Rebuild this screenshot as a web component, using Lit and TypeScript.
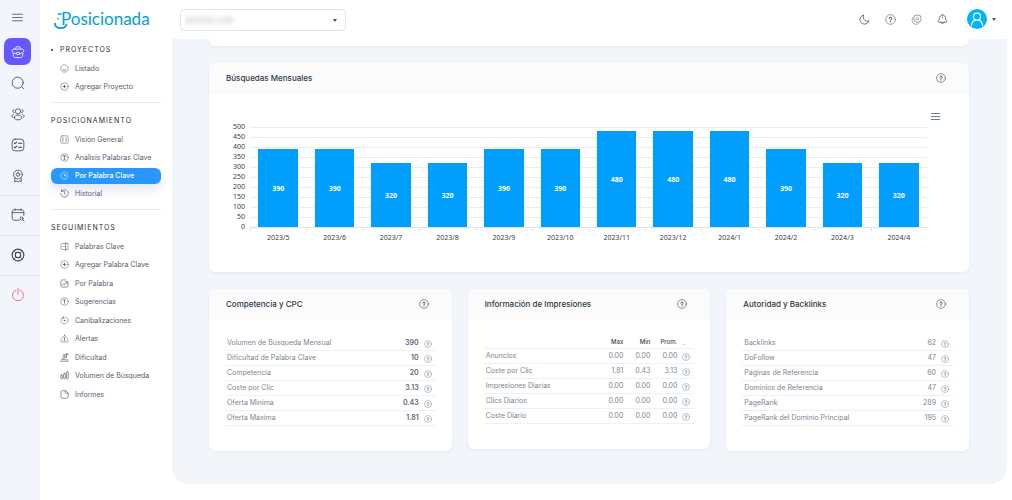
import { LitElement, html, svg, css, nothing } from "lit";
import { customElement, property } from "lit/decorators.js";
import { classMap } from "lit/directives/class-map.js";

const ICONS: Record<string, unknown> = {
  menu: svg`<path d="M3 6h18M3 12h18M3 18h18"/>`,
  lines: svg`<path d="M3 5.500h18M3 12h18M3 18.500h18" stroke-width="2.600"/>`,
  briefcase: svg`<path d="M8 7V5.500C8 4 9 3 10.500 3h3C15 3 16 4 16 5.500V7M5 7h14c1.700 0 3 1.300 3 3v0c0 2.500-4 4.500-7 5M9 15c-3-.5-7-2.500-7-5v0c0-1.700 1.300-3 3-3M3.500 14l.7 4.500C4.500 20.500 5.500 21.500 7.500 21.500h9c2 0 3-1 3.300-3l.7-4.500"/><ellipse cx="12" cy="14.500" rx="3" ry="2.200"/>`,
  search: svg`<circle cx="11.500" cy="11.500" r="9.500"/><path d="M18.500 18.500L22 22"/>`,
  people: svg`<circle cx="12" cy="7.500" r="4.500"/><path d="M5.500 18c0-2.500 3-4 6.500-4s6.500 1.500 6.500 4-3 4-6.500 4-6.500-1.500-6.500-4z"/><path d="M5.500 4.500c-3 0-3.500 5 0 5M18.500 4.500c3 0 3.500 5 0 5M4 13c-3 .5-3.500 4-1 5M20 13c3 .5 3.500 4 1 5"/>`,
  checklist: svg`<rect x="2" y="2" width="20" height="20" rx="5"/><path d="M5.500 8.500l1.300 1.300L10 7M5.500 15.500l1.300 1.300L10 14M13 9h5.500M13 16h5.500" stroke-width="1.800"/>`,
  award: svg`<circle cx="12" cy="9.500" r="7.500"/><circle cx="12" cy="9.500" r="3"/><path d="M12 6v1M6.500 15.500V22l3-1.500L12 22l2.500-1.500 3 1.500v-6.500"/>`,
  calendar: svg`<path d="M14 21H6c-2.500 0-4-1.500-4-4V7c0-2.500 1.500-4 4-4h12c2.500 0 4 1.500 4 4v6M2 8h20M7 1.500V4M17 1.500V4"/><circle cx="18" cy="18" r="2.700"/><path d="M20 20l2.500 2.500"/>`,
  support: svg`<circle cx="12" cy="12" r="10" stroke-width="2"/><rect x="7.500" y="7.500" width="9" height="9" rx="3.500" stroke-width="2"/><path d="M4.800 4.800l3.500 3.500M19.200 4.800l-3.500 3.500M4.800 19.200l3.500-3.500M19.200 19.200l-3.500-3.500" stroke-width="1"/>`,
  power: svg`<path d="M8.500 3.500a9.500 9.500 0 1 0 7 0M12 1v10"/>`,
  smile: svg`<path d="M8 2.500h8L21.500 8v8L16 21.500H8L2.500 16V8z"/><path d="M8.500 15.500q3.500 2.500 7 0" stroke-width="2"/>`,
  plus: svg`<circle cx="12" cy="12" r="10"/><path d="M12 8.500v7M8.500 12h7" stroke-width="2.200"/>`,
  overview: svg`<rect x="2" y="2" width="20" height="20" rx="4"/><path d="M7 8h2M15 8h2M7 12h.5M16.500 12h.5M7 16h2M15 16h2" stroke-width="2"/>`,
  textcircle: svg`<circle cx="12" cy="12" r="10"/><path d="M7.500 9V7.500h9V9M12 7.500V17M10 17h4" stroke-width="1.800"/>`,
  target: svg`<path d="M13 2.500a9.700 9.700 0 1 0 8.500 8.500M11.500 13L21 3M11.500 8v5h5"/>`,
  history: svg`<path d="M4 6a10 10 0 1 1-2 6M4 2v4.500h4.500M12 7v5.500l3.500 2" stroke-width="1.800"/>`,
  word: svg`<path d="M13 4H5C3.500 4 2.500 5 2.500 6.500v11C2.500 19 3.500 20 5 20h8M17 4h4.500v16H17M7.500 12h5"/><path d="M15 1.500v21" stroke-width="2"/>`,
  chart: svg`<path d="M21.500 11v6c0 3-1.500 4.500-4.500 4.500H7c-3 0-4.500-1.500-4.500-4.500V7c0-3 1.500-4.500 4.500-4.500h8M6 16l4-3 3 2 6-8M16 7h4v4" stroke-width="1.800"/>`,
  suggest: svg`<circle cx="12" cy="12" r="10"/><path d="M12 17V8M8.500 9.500L12 6.500l3.500 3" stroke-width="1.800"/>`,
  cycle: svg`<path d="M10 3.500C5 4 2 8 2.500 13s5 8.500 10 7.500M15 3.500c4.500 1 7 5 6.500 9.500s-3.500 6.500-6 7.500M10 1.500v4.500H6"/><circle cx="12" cy="12" r="1.200" stroke-width="2"/>`,
  alert: svg`<path d="M12 3C9.500 3 2 17 2 18.500S3.500 21 5 21h14c1.500 0 3-1 3-2.500S14.500 3 12 3z"/><path d="M12 9v5.500M12 17v.8" stroke-width="2"/>`,
  climb: svg`<path d="M2 22h20M3 18.500c3 0 4-2 7-2s4 2 11 2M6 11c3-3 6-3 8-1l-4 6M14 10l4 3M7 16l3-3M17 2v8M17 2l5 1.700L17 6" stroke-width="1.800"/><circle cx="11" cy="5" r="2"/>`,
  bars: svg`<g stroke-width="1.800"><rect x="2" y="10" width="4.500" height="11" rx="2"/><rect x="9.700" y="6" width="4.500" height="15" rx="2"/><rect x="17.500" y="2" width="4.500" height="19" rx="2"/></g>`,
  file: svg`<path d="M14 2H6.500C4 2 2.500 3.500 2.500 6v12c0 2.500 1.500 4 4 4h11c2.500 0 4-1.500 4-4V9zM14 2v3.500C14 8 15 9 17.500 9h4" stroke-width="1.800"/>`,
  moon: svg`<path d="M10 2.500C5 3.500 2 7.500 2 12c0 5.500 4.500 10 10 10 4.500 0 8.500-3 9.700-7.500-4 2.500-9 1-11-3-1.500-3-1.700-6-.7-9z" stroke-width="2"/>`,
  help: svg`<circle cx="12" cy="12" r="10.500"/><path d="M9.200 10c0-3.700 5.800-3.500 5.600-.2-.1 1.700-2.800 2-2.800 4M12 16.300v1" stroke-width="2.200"/>`,
  star: svg`<path d="M14 2l3 1.500L20.500 4l.5 3.500 1.500 3-1.500 3-1 3-3.500.5-3 1.500-3-2-3-1-.5-3L5.500 10 7 7l.5-3.500L11 3.500z"/><path d="M4.500 8c-4 5-2 12 4 14 4 1 7-.5 9-2.500M11 9c1.500-1.500 4.500-1.500 6 .5M11 12c1.500 1 4 1 6-.5"/>`,
  bell: svg`<path d="M12 2c-4 0-6.500 3-6.500 7 0 4-3 5.500-3 7.500 0 1 1 1.500 2 1.500h15c1 0 2-.5 2-1.500 0-2-3-3.500-3-7.500 0-4-2.500-7-6.500-7zM8.500 18c.5 4.500 6.500 4.500 7 0" stroke-width="1.900"/><path d="M12 6v3"/>`,
  user: svg`<g stroke-width="2"><circle cx="12" cy="8" r="6"/><path d="M2.500 23c.5-5 3-8 6.500-9.500M21.500 23c-.5-5-3-8-6.500-9.500"/></g>`,
};

@customElement("ui-icon")
class UiIcon extends LitElement {
  @property() name = "menu";
  static styles = css`
    :host { display: inline-flex; width: 14px; height: 14px; flex: none; }
    svg { width: 100%; height: 100%; fill: none; stroke: currentColor; stroke-width: 1.400; stroke-linecap: round; stroke-linejoin: round; }
  `;
  render() {
    return html`<svg viewBox="0 0 24 24" aria-hidden="true">${ICONS[this.name]}</svg>`;
  }
}

type Item = [icon: string, label: string];
const SECTIONS: { title: string; dot?: boolean; items: Item[] }[] = [
  { title: "Proyectos", dot: true, items: [["smile", "Listado"], ["plus", "Agregar Proyecto"]] },
  {
    title: "Posicionamiento",
    items: [["overview", "Visión General"], ["textcircle", "Análisis Palabras Clave"], ["target", "Por Palabra Clave"], ["history", "Historial"]],
  },
  {
    title: "Seguimientos",
    items: [
      ["word", "Palabras Clave"], ["plus", "Agregar Palabra Clave"], ["chart", "Por Palabra"],
      ["suggest", "Sugerencias"], ["cycle", "Canibalizaciones"], ["alert", "Alertas"],
      ["climb", "Dificultad"], ["bars", "Volumen de Búsqueda"], ["file", "Informes"],
    ],
  },
];

@customElement("side-menu")
class SideMenu extends LitElement {
  static styles = css`
    :host { display: block; padding: 4px 11px 16px; }
    section + section { border-top: 1px solid #e4eaf1; margin-top: 6px; padding-top: 11px; }
    h2 { display: flex; align-items: center; gap: 7px; margin: 0 0 4px; font-size: 7px; line-height: 13px; font-weight: 400; letter-spacing: 1px; text-transform: uppercase; color: #1f2c3d; }
    .dot { width: 2px; height: 2px; border-radius: 50%; background: #1d2939; }
    ul { list-style: none; margin: 0; padding: 0; }
    li:nth-child(even) { margin-bottom: 1px; }
    a { display: flex; align-items: center; gap: 6px; height: 17px; padding: 0 0 1px 9px; font-size: 7px; white-space: nowrap; color: #566170; text-decoration: none; }
    ui-icon { width: 9px; height: 9px; }
    .active { height: 15px; margin: 1px 0; border-radius: 6px; background: #2897ff; color: #fff; font-weight: 500; box-shadow: 0 6px 10px #e6e6fb; }
  `;
  render() {
    return SECTIONS.map(
      (s) => html`<section>
        <h2>${s.dot ? html`<span class="dot"></span>` : nothing}${s.title}</h2>
        <ul>
          ${s.items.map(
            ([icon, label]) => html`<li>
              <a href="#" class=${classMap({ active: label === "Por Palabra Clave" })}><ui-icon name=${icon}></ui-icon>${label}</a>
            </li>`
          )}
        </ul>
      </section>`
    );
  }
}

@customElement("help-button")
class HelpButton extends LitElement {
  static styles = css`
    :host { display: inline-flex; width: 8px; height: 8px; vertical-align: middle; }
    button { all: unset; display: flex; width: 100%; cursor: pointer; color: inherit; }
    ui-icon { width: 100%; height: 100%; }
  `;
  render() {
    return html`<button aria-label="Ayuda"><ui-icon name="help"></ui-icon></button>`;
  }
}

@customElement("info-card")
class InfoCard extends LitElement {
  @property() heading = "";
  static styles = css`
    :host { display: block; background: #fff; border-radius: 6px; box-shadow: 0 1px 3px #e3e8f1; }
    header { display: flex; align-items: center; justify-content: space-between; height: 29px; padding: 0 23px 2px 17px; background: #fbfbfc; border-radius: 6px 6px 0 0; }
    h3 { margin: 0; font-size: 8px; line-height: 12px; font-weight: 500; color: #2b3a4a; }
    help-button { width: 10px; height: 10px; color: #3f4a57; }
  `;
  render() {
    return html`<header><h3>${this.heading}</h3><help-button></help-button></header><slot></slot>`;
  }
}

const MONTHS: [string, number][] = [
  ["2023/5", 390], ["2023/6", 390], ["2023/7", 320], ["2023/8", 320], ["2023/9", 390], ["2023/10", 390],
  ["2023/11", 480], ["2023/12", 480], ["2024/1", 480], ["2024/2", 390], ["2024/3", 320], ["2024/4", 320],
];
const TICKS = [500, 450, 400, 350, 300, 250, 200, 150, 100, 50, 0];

@customElement("month-chart")
class MonthChart extends LitElement {
  static styles = css`
    :host { display: block; padding: 17px 28px 29px 24px; font-family: "Liberation Sans Narrow", "Noto Sans", sans-serif; color: #373d3f; }
    .tools { display: flex; justify-content: flex-end; }
    .tools button { all: unset; display: flex; cursor: pointer; color: #6e8192; }
    .tools ui-icon { width: 11px; height: 11px; }
    .body { display: grid; grid-template-columns: 12px 1fr; column-gap: 5px; padding-right: 14px; }
    .scale { margin-bottom: -4px; font-size: 7px; line-height: 10px; text-align: right; }
    .plot { display: flex; height: 100px; margin-top: 5px; border-bottom: 1px solid #e0e3e6; background: repeating-linear-gradient(#ebedef 0 1px, transparent 1px 10px); }
    .slot { flex: 1; display: flex; align-items: flex-end; justify-content: center; }
    .bar { width: 70%; display: flex; align-items: center; justify-content: center; background: #009ffd; color: #fff; font-size: 7px; font-weight: 700; }
    .months { grid-column: 2; display: flex; }
    .months span { flex: 1; padding-top: 5px; font-size: 7px; line-height: 10px; text-align: center; background: linear-gradient(#e0e3e6, #e0e3e6) 0 0 / 1px 3px no-repeat; }
  `;
  render() {
    return html`
      <div class="tools"><button aria-label="Menú del gráfico"><ui-icon name="lines"></ui-icon></button></div>
      <div class="body">
        <div class="scale">${TICKS.map((t) => html`<div>${t}</div>`)}</div>
        <div class="plot">
          ${MONTHS.map(([, v]) => html`<div class="slot"><div class="bar" style="height:${v / 5}%">${v}</div></div>`)}
        </div>
        <div class="months">${MONTHS.map(([m]) => html`<span>${m}</span>`)}</div>
      </div>
    `;
  }
}

@customElement("data-table")
class DataTable extends LitElement {
  @property({ attribute: false }) columns: string[] = [];
  @property({ attribute: false }) rows: string[][] = [];
  @property({ type: Boolean }) strong = false;
  static styles = css`
    :host { display: block; padding: 16px 16px 25px; }
    table { width: 100%; table-layout: fixed; border-collapse: separate; border-spacing: 0; font-size: 7px; line-height: 12px; color: #7b8794; }
    th, td { box-sizing: border-box; width: 27px; height: 15px; padding: 0; border-bottom: 1px solid #eef0f3; text-align: right; font-weight: 400; white-space: nowrap; }
    .name { width: auto; padding-left: 2px; text-align: left; }
    .strong td { font-weight: 600; color: #5b6878; }
    thead th, thead td { height: 13px; font-size: 6px; font-weight: 500; color: #3c4855; }
    .help { width: 17px; padding: 1px 4px 0 0; line-height: 8px; }
    thead .help { text-align: center; }
    help-button { color: #76828f; }
  `;
  render() {
    return html`<table class=${classMap({ strong: this.strong })}>
      ${this.columns.length
        ? html`<thead><tr><td class="name"></td>${this.columns.map((c) => html`<th scope="col">${c}</th>`)}<th class="help">.</th></tr></thead>`
        : nothing}
      <tbody>
        ${this.rows.map(
          ([name, ...vals]) => html`<tr>
            <th class="name" scope="row">${name}</th>
            ${vals.map((v) => html`<td>${v}</td>`)}
            <td class="help"><help-button></help-button></td>
          </tr>`
        )}
      </tbody>
    </table>`;
  }
}

const COMPETITION = [
  ["Volumen de Búsqueda Mensual", "390"], ["Dificultad de Palabra Clave", "10"], ["Competencia", "20"],
  ["Coste por Clic", "3.13"], ["Oferta Mínima", "0.43"], ["Oferta Máxima", "1.81"],
];
const IMPRESSIONS = [
  ["Anuncios", "0.00", "0.00", "0.00"], ["Coste por Clic", "1.81", "0.43", "3.13"],
  ["Impresiones Diarias", "0.00", "0.00", "0.00"], ["Clics Diarios", "0.00", "0.00", "0.00"],
  ["Coste Diario", "0.00", "0.00", "0.00"],
];
const AUTHORITY = [
  ["Backlinks", "62"], ["DoFollow", "47"], ["Páginas de Referencia", "60"],
  ["Dominios de Referencia", "47"], ["PageRank", "289"], ["PageRank del Dominio Principal", "195"],
];

@customElement("app-root")
class AppRoot extends LitElement {
  static styles = css`
    :host { display: grid; grid-template-columns: 40px 132px minmax(0, 1fr); grid-template-rows: 39px auto; min-height: 100vh; background: #fff; font-family: Inter, "Open Sans", sans-serif; }
    .rail { grid-row: 1 / 3; display: flex; flex-direction: column; background: #f2f6fb; padding-top: 4px; }
    .rail button { all: unset; display: grid; place-items: center; width: 27px; height: 27px; margin: 0 0 4px 4px; border-radius: 7px; color: #3a4757; cursor: pointer; }
    .rail .toggle { margin-bottom: 7px; }
    .rail .toggle ui-icon { width: 13px; height: 13px; }
    .rail .current { background: #6658ff; color: #fff; }
    .rail .end { margin-top: 5px; margin-bottom: 5px; }
    .rail hr { width: 100%; margin: 2px 0 0; border: 0; border-top: 1px solid #e0e7f0; }
    .rail .power { color: #fb4c85; }
    .top { grid-column: 2 / 4; display: flex; align-items: center; }
    .logo { display: flex; align-items: center; width: 126px; padding: 0 0 2px 14px; color: #009fdb; text-decoration: none; font: 400 17px/20px Lato, sans-serif; }
    .logo svg { width: 16px; height: 20px; fill: none; stroke: currentColor; stroke-width: 1.700; stroke-linecap: round; }
    .logo .word { margin-left: -9px; }
    .picker { position: relative; display: flex; width: 166px; height: 22px; }
    .picker select { appearance: none; box-sizing: border-box; width: 100%; height: 100%; padding: 0 20px 0 4px; border: 1px solid #e2e6ea; border-radius: 4px; background: #fff; font: 8px/20px Inter, sans-serif; color: transparent; text-shadow: 0 0 5px #a5a9af; }
    .caret { width: 0; height: 0; border: 2px solid transparent; border-top: 3px solid #4a5563; border-bottom: 0; }
    .picker .caret { position: absolute; right: 9px; top: 10px; }
    .actions { display: flex; align-items: center; margin-left: auto; padding: 0 16px 1px 0; color: #566b80; }
    .actions button { all: unset; display: flex; align-items: center; cursor: pointer; }
    .actions .tool { width: 12px; height: 12px; margin-right: 14px; }
    .actions .tool ui-icon { width: 11px; height: 11px; }
    .actions .account { gap: 5px; margin-left: 4px; }
    .avatar { display: grid; place-items: center; width: 20px; height: 20px; border-radius: 50%; background: #00b5fb; color: #fff; }
    main { margin: 0 5px 16px 0; padding: 0 38px 33px 37px; border-radius: 0 0 16px 16px; background: #f2f6fb; }
    .previous { height: 7px; border-radius: 0 0 6px 6px; background: #fff; box-shadow: 0 1px 3px #e3e8f1; }
    .monthly { margin: 17px 0; }
    .cards { display: grid; grid-template-columns: repeat(3, minmax(0, 1fr)); gap: 16px; align-items: start; }
  `;
  render() {
    const rail = (name: string, label: string, cls = "") =>
      html`<button class=${cls} aria-label=${label}><ui-icon name=${name}></ui-icon></button>`;
    return html`
      <nav class="rail" aria-label="Principal">
        ${rail("menu", "Menú", "toggle")} ${rail("briefcase", "Proyectos", "current")}
        ${rail("search", "Buscar")} ${rail("people", "Usuarios")} ${rail("checklist", "Tareas")} ${rail("award", "Premios")}
        <hr />${rail("calendar", "Calendario", "end")}
        <hr />${rail("support", "Soporte", "end")}
        <hr />${rail("power", "Salir", "end power")}
      </nav>
      <header class="top">
        <a class="logo" href="#">
          <svg viewBox="0 0 16 20" aria-hidden="true"><path d="M1 14.500v1C2 20 11 20.500 12.500 15.500M4 9.500v.1M4.500 5h2.500"/></svg>
          <span class="word">Posicionada</span>
        </a>
        <div class="picker">
          <select aria-label="Proyecto"><option>dominio.com</option></select>
          <span class="caret"></span>
        </div>
        <div class="actions">
          <button class="tool" aria-label="Modo oscuro"><ui-icon name="moon"></ui-icon></button>
          <button class="tool" aria-label="Ayuda"><ui-icon name="help"></ui-icon></button>
          <button class="tool" aria-label="Novedades"><ui-icon name="star"></ui-icon></button>
          <button class="tool" aria-label="Notificaciones"><ui-icon name="bell"></ui-icon></button>
          <button class="account" aria-label="Cuenta"><span class="avatar"><ui-icon name="user"></ui-icon></span><span class="caret"></span></button>
        </div>
      </header>
      <side-menu></side-menu>
      <main>
        <div class="previous"></div>
        <info-card class="monthly" heading="Búsquedas Mensuales"><month-chart></month-chart></info-card>
        <div class="cards">
          <info-card heading="Competencia y CPC"><data-table strong .rows=${COMPETITION}></data-table></info-card>
          <info-card heading="Información de Impresiones"><data-table .columns=${["Max", "Min", "Prom."]} .rows=${IMPRESSIONS}></data-table></info-card>
          <info-card heading="Autoridad y Backlinks"><data-table .rows=${AUTHORITY}></data-table></info-card>
        </div>
      </main>
    `;
  }
}
